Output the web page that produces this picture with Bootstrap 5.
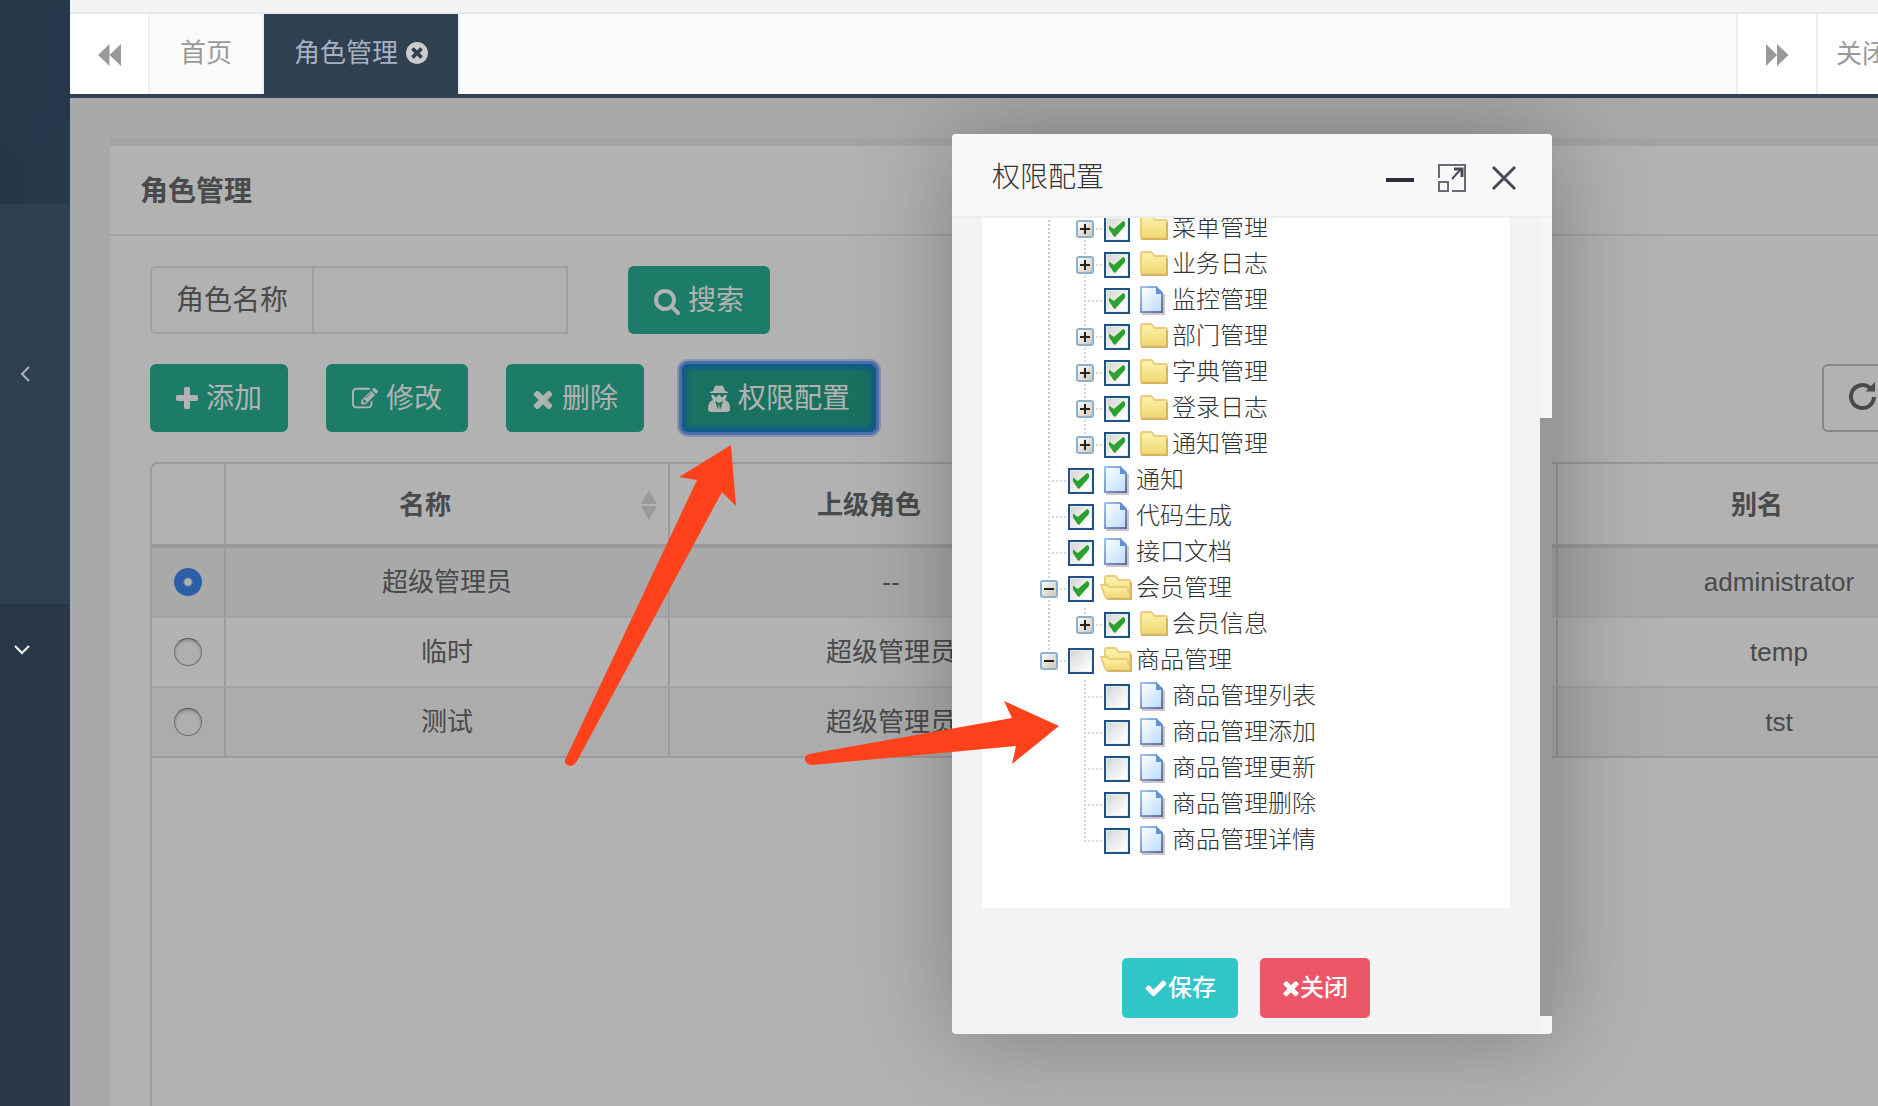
<!DOCTYPE html>
<html lang="zh-CN">
<head>
<meta charset="utf-8">
<meta name="viewport" content="width=device-width, initial-scale=1">
<title>角色管理</title>
<link href="https://cdn.jsdelivr.net/npm/bootstrap@5.3.0/dist/css/bootstrap.min.css" rel="stylesheet">
<style>
:root { --navy:#2f4050; --line:#e7eaec; --grid:#ddd; --ink:#676a6c; --teal:#29b294; }
body { font-family:"Liberation Sans","Noto Sans CJK SC",sans-serif; font-size:26px; line-height:36px; color:var(--ink); background:#f3f3f4; }
button, input { font-family:inherit; }
.side { width:70px; background:#293846; }
.side-head { height:204px; background:#263949; }
.side-group { height:400px; background:var(--navy); padding:162px 0 0 20px; color:#a7b1c2; }
.side-open { padding:40px 0 0 13px; color:#fff; }
.side a { color:inherit; line-height:0; }
.content-col { min-width:0; }
.tabs-row { margin-top:12px; height:86px; border-top:2px solid var(--line); border-bottom:4px solid var(--navy); background:#fafafa; }
.tabs-row button, .tabs-row a { border:0; background:#fff; color:#999; text-decoration:none; white-space:nowrap; }
.tabs-row .step { width:80px; padding:0 0 2px 2px; }
.tabs-row .edge-r { border-right:2px solid #eee; }
.tabs-row .edge-l { border-left:2px solid #eee; }
.tabs-row .tab { background:#fafafa; padding:0 30px 2px; }
.tabs-row .tab.current { background:var(--navy); color:#a7b1c2; gap:8px; }
.tabs-row .more { width:62px; padding:0 0 0 18px; overflow:hidden; }
.stage { padding:40px 0 0 40px; }
.panel { border-top:8px solid var(--line); background:#fff; }
.panel-title { font-size:28px; font-weight:700; line-height:40px; padding:26px 30px 22px; border-bottom:2px solid var(--line); }
.panel-main { padding:30px 0 0 40px; }
.big, .find { font-size:28px; line-height:40px; }
.find { height:68px; width:418px; }
.find label { border:2px solid #e5e6e7; border-right:0; border-radius:6px 0 0 6px; width:162px; padding-top:2px; }
.find input { border:2px solid #e5e6e7; border-radius:0; min-width:0; font-size:28px; }
.find-go { margin-left:60px; }
.tools { margin-top:30px; gap:38px; }
.big { height:68px; padding:2px 24px 0; border:2px solid var(--teal); border-radius:6px; background:var(--teal); color:#fff; gap:8px; white-space:nowrap; }
.big.active-focus { background:#25a489; border-color:#1a81c8; box-shadow:0 0 0 3px #6aa3f8,0 0 0 5px #c0d4fa,inset 0 0 5px 3px #1a81c8; }
.reload { width:84px; margin-right:-28px; height:68px; border:2px solid #c0c0c0; border-radius:6px; background:#fff; color:var(--ink); padding:0 0 4px 24px; text-align:left; line-height:0; }
.grid-box { border:2px solid var(--grid); border-right:0; border-bottom:0; border-radius:8px 0 0 0; margin-top:30px; }
.grid-box table { table-layout:fixed; width:1850px; border-collapse:separate; border-spacing:0; }
.grid-box th, .grid-box td { border-right:2px solid var(--grid); text-align:center; padding:0; vertical-align:middle; }
.grid-box th { height:84px; border-bottom:4px solid var(--grid); padding-top:2px; }
.grid-box td { height:70px; border-bottom:2px solid var(--line); }
.grid-box tr:last-child td { border-bottom-color:var(--grid); }
.grid-box tbody tr:nth-child(1) { background:#f3f3f3; }
.grid-box tbody tr:nth-child(3) { background:#f6f6f6; }
.c-pick { width:74px; } .c-data { width:444px; }
.th-in { padding:0 11px 0 16px; }
.sorter { width:49px; text-align:right; line-height:0; }
.pick { display:block; appearance:none; width:28px; height:28px; margin:0 auto; border-radius:50%; border:1px solid #9b9b9b; border-top-color:#777; background:#fbfbfb; box-shadow:inset 0 2px 3px #ccc; }
.pick:checked { border:0; background:radial-gradient(circle,#fff 3px,#4089f0 5px); box-shadow:none; }
.veil { position:absolute; inset:0; background:rgba(0,0,0,.3); }
.dialog { position:absolute; left:882px; top:36px; width:600px; border-radius:4px; background:#f3f3f4; box-shadow:2px 2px 100px rgba(0,0,0,.3); color:#333; }
.dialog-top { height:84px; background:#f8f8f8; border-bottom:2px solid #eee; border-radius:4px 4px 0 0; padding:6px 34px 0 40px; font-size:28px; font-weight:300; }
.dialog-top button { border:0; background:none; padding:0; line-height:0; }
.dialog-tools { gap:24px; }
.tree-pane { height:690px; margin:0 42px 0 30px; background:#fff; overflow:hidden; padding-left:50px; font-size:24px; font-weight:300; }
.tree-pane ul { list-style:none; margin:0; padding:0; }
.tree-pane > ul { margin-top:-7px; }
.tree-pane ul ul { padding-left:36px; }
.rail { background:radial-gradient(circle,#c8c8c8 1px,transparent 1px) 15px 0/4px 4px repeat-y; }
.node { height:36px; }
.node .twig { width:36px; height:36px; flex:none; }
.node input { appearance:none; width:26px; height:26px; margin:0 10px 0 0; border:2px solid #1f5385; background:linear-gradient(135deg,#d3d4cf,#fff 85%); box-shadow:inset 0 0 0 1px #e9eef2; flex:none; }
.node input:checked::after { content:""; display:block; width:16px; height:16px; margin:3px; background:#2ba12f; clip-path:polygon(0 28%,30% 50%,88% 0,100% 8%,100% 30%,38% 100%,28% 94%,0 52%); }
.node .pic { width:32px; height:32px; margin:0 4px 2px -4px; flex:none; }
.node label { line-height:34px; padding-bottom:2px; }
.dialog-foot { padding:50px 12px 16px 0; gap:22px; }
.act { height:60px; border:0; border-radius:5px; padding:0 22px; color:#fff; font-size:24px; font-weight:500; }
.act-save { background:#30c5c8; } .act-close { background:#eb5768; }
.track { position:absolute; right:0; top:84px; width:12px; bottom:0; background:#f6f6f6; border-radius:0 0 4px 0; }
.thumb { margin-top:200px; height:598px; background:#989898; }
.marks { position:absolute; left:0; top:0; pointer-events:none; }
</style>
<script src="https://cdn.jsdelivr.net/npm/bootstrap@5.3.0/dist/js/bootstrap.bundle.min.js"></script>
</head>
<body>
<svg width="0" height="0" class="position-absolute" aria-hidden="true">
 <defs>
  <linearGradient id="gF" x1="0" y1="0" x2="0" y2="1"><stop offset="0" stop-color="#fdf4ae"/><stop offset="1" stop-color="#efd873"/></linearGradient>
  <linearGradient id="gD" x1="0" y1="0" x2="1" y2="1"><stop offset="0" stop-color="#fff"/><stop offset="1" stop-color="#b9dcfb"/></linearGradient>
  <linearGradient id="gE" x1="0" y1="0" x2="1" y2="1"><stop offset="0" stop-color="#9cc4f0"/><stop offset="1" stop-color="#67699f"/></linearGradient>
  <linearGradient id="gB" x1="0" y1="0" x2="1" y2="1"><stop offset="0" stop-color="#fff"/><stop offset="1" stop-color="#cbc3b5"/></linearGradient>
 </defs>
 <symbol id="times" viewBox="192 0 1408 1792"><path fill="currentColor" d="M1490 1322q0 40-28 68l-136 136q-28 28-68 28t-68-28l-294-294-294 294q-28 28-68 28t-68-28l-136-136q-28-28-28-68t28-68l294-294-294-294q-28-28-28-68t28-68l136-136q28-28 68-28t68 28l294 294 294-294q28-28 68-28t68 28l136 136q28 28 28 68t-28 68l-294 294 294 294q28 28 28 68z"/></symbol>
 <symbol id="back" viewBox="0 0 24 24"><path fill="currentColor" d="M11.500 1v22L0 12zM23 1v22L11.500 12z"/></symbol>
 <symbol id="leaf" viewBox="0 0 36 36"><path d="M17 2V36M21 18H36" stroke="#ccc" stroke-width="2" stroke-linecap="round" stroke-dasharray="0 4" fill="none"/></symbol>
 <symbol id="last" viewBox="0 0 36 36"><path d="M17 2V18H36" stroke="#ccc" stroke-width="2" stroke-linecap="round" stroke-dasharray="0 4" fill="none"/></symbol>
 <symbol id="boxed" viewBox="0 0 36 36"><path d="M29 18H36" stroke="#ccc" stroke-width="2" stroke-linecap="round" stroke-dasharray="0 4"/><rect x="9" y="10" width="16" height="16" rx="2" fill="url(#gB)" stroke="#8fb0cd" stroke-width="2"/><path d="M12 18H22" stroke="#222" stroke-width="2"/></symbol>
 <symbol id="plus-mid" viewBox="0 0 36 36"><path d="M17 2V36" stroke="#ccc" stroke-width="2" stroke-linecap="round" stroke-dasharray="0 4"/><use href="#boxed"/><path d="M17 13V23" stroke="#222" stroke-width="2"/></symbol>
 <symbol id="plus-end" viewBox="0 0 36 36"><path d="M17 2V10" stroke="#ccc" stroke-width="2" stroke-linecap="round" stroke-dasharray="0 4"/><use href="#boxed"/><path d="M17 13V23" stroke="#222" stroke-width="2"/></symbol>
 <symbol id="minus-mid" viewBox="0 0 36 36"><path d="M17 2V36" stroke="#ccc" stroke-width="2" stroke-linecap="round" stroke-dasharray="0 4"/><use href="#boxed"/></symbol>
 <symbol id="minus-end" viewBox="0 0 36 36"><path d="M17 2V10" stroke="#ccc" stroke-width="2" stroke-linecap="round" stroke-dasharray="0 4"/><use href="#boxed"/></symbol>
 <symbol id="dir" viewBox="0 0 32 32"><path d="M5 25V6q0-2 2-2h8l4 4h10q2 0 2 2v15q0 1-1 1H6q-1 0-1-1z" fill="url(#gF)" stroke="#ecca80" stroke-width="2"/><path d="M5 27H31V11" fill="none" stroke="#d9b45e" stroke-width="2"/></symbol>
 <symbol id="dir-open" viewBox="0 0 32 32"><path d="M5 14V6q0-2 2-2h8l4 4h9q2 0 2 2v16H8z" fill="url(#gF)" stroke="#ebcd7e" stroke-width="2"/><path d="M1 13h6l2 2h17q1 0 1.500 1l2.500 10H7q-1 0-1.500-1z" fill="url(#gF)" stroke="#ebcd7e" stroke-width="2"/><path d="M7 27H31V10" fill="none" stroke="#d9b45e" stroke-width="2"/></symbol>
 <symbol id="doc" viewBox="0 0 32 32"><path d="M6 30H28V10" fill="none" stroke="#c8c8cc" stroke-width="2"/><path d="M5 3H20L26 9V28H5z" fill="url(#gD)" stroke="url(#gE)" stroke-width="2"/><path d="M20 2L27 10H20z" fill="#5f93cf"/></symbol>
</svg>

<div class="d-flex min-vh-100 overflow-hidden">
 <nav class="side flex-shrink-0" aria-label="侧栏">
  <div class="side-head"><svg width="70" height="204" viewBox="0 0 70 204"><path d="M0 138L24 160 70 120V204H0z" fill="#263a49"/><path d="M0 138L24 160 22 204H0z" fill="#253745"/><path d="M50 0L70 10V120L24 160Q45 90 50 0z" fill="#253748"/><path d="M24 160L70 188V120z" fill="#273a4a"/></svg></div>
  <div class="side-group"><a href="#" aria-label="展开" class="d-block"><svg width="12" height="16" viewBox="0 0 12 16" fill="none" stroke="currentColor" stroke-width="2"><path d="M9 1L2 8l7 7"/></svg></a></div>
  <div class="side-open"><a href="#" aria-label="收起" class="d-block"><svg width="17" height="11" viewBox="0 0 17 11" fill="none" stroke="currentColor" stroke-width="2"><path d="M2 2l7 7 7-7"/></svg></a></div>
 </nav>

 <div class="content-col d-flex flex-column flex-grow-1">
  <div class="tabs-row d-flex align-items-stretch flex-shrink-0">
   <button class="step edge-r" aria-label="向左"><svg width="24" height="24"><use href="#back"/></svg></button>
   <a href="#" class="tab edge-r d-flex align-items-center">首页</a>
   <a href="#" class="tab current edge-r d-flex align-items-center">角色管理
    <svg width="22" height="22" viewBox="128 128 1536 1536"><path fill="#ccc" d="M1277 1122q0-26-19-45l-181-181 181-181q19-19 19-45 0-27-19-46l-90-90q-19-19-46-19-26 0-45 19l-181 181-181-181q-19-19-45-19-27 0-46 19l-90 90q-19 19-19 46 0 26 19 45l181 181-181 181q-19 19-19 45 0 27 19 46l90 90q19 19 46 19 26 0 45-19l181-181 181 181q19 19 45 19 27 0 46-19l90-90q19-19 19-46zm387-226q0 209-103 385.500t-279.500 279.500-385.500 103-385.500-103-279.500-279.500-103-385.500 103-385.500 279.500-279.500 385.500-103 385.500 103 279.500 279.500 103 385.500z"/></svg></a>
   <button class="step edge-l ms-auto" aria-label="向右"><svg width="24" height="24" viewBox="0 0 24 24"><path fill="currentColor" d="M0 1v22l11-11zM11 1v22l11.500-11z"/></svg></button>
   <button class="more edge-l text-start flex-shrink-0">关闭</button>
  </div>

  <main class="stage position-relative overflow-hidden flex-grow-1 d-flex flex-column">
   <section class="panel flex-grow-1 d-flex flex-column">
    <h1 class="panel-title m-0">角色管理</h1>
    <div class="panel-main flex-grow-1 d-flex flex-column">
     <form class="d-flex">
      <div class="find d-flex"><label for="roleName" class="d-flex align-items-center justify-content-center flex-shrink-0">角色名称</label><input id="roleName" type="text" class="flex-grow-1"></div>
      <button type="button" class="big find-go d-flex align-items-center"><svg width="26" height="28" viewBox="64 0 1664 1792"><path fill="currentColor" d="M1216 832q0-185-131.500-316.500t-316.500-131.500-316.500 131.500-131.500 316.500 131.500 316.500 316.500 131.500 316.500-131.500 131.500-316.500zm512 832q0 52-38 90t-90 38q-54 0-90-38l-343-342q-179 124-399 124-143 0-273.500-55.500t-225-150-150-225-55.500-273.500 55.500-273.500 150-225 225-150 273.500-55.500 273.500 55.500 225 150 150 225 55.500 273.500q0 220-124 399l343 343q37 37 37 90z"/></svg>搜索</button>
     </form>
     <div class="tools d-flex">
      <button class="big d-flex align-items-center"><svg width="22" height="28" viewBox="192 0 1408 1792"><path fill="currentColor" d="M1600 736v192q0 40-28 68t-68 28h-416v416q0 40-28 68t-68 28h-192q-40 0-68-28t-28-68v-416h-416q-40 0-68-28t-28-68v-192q0-40 28-68t68-28h416v-416q0-40 28-68t68-28h192q40 0 68 28t28 68v416h416q40 0 68 28t28 68z"/></svg>添加</button>
      <button class="big d-flex align-items-center"><svg width="26" height="28" viewBox="0 0 1792 1792"><path fill="currentColor" d="M888 1184l116-116-152-152-116 116v56h96v96h56zm440-720q-16-16-33 1l-350 350q-17 17-1 33t33-1l350-350q17-17 1-33zm80 594v190q0 119-84.500 203.500t-203.500 84.500h-832q-119 0-203.500-84.500t-84.500-203.500v-832q0-119 84.500-203.500t203.500-84.500h832q63 0 117 25 15 7 18 23 3 17-9 29l-49 49q-14 14-32 8-23-6-45-6h-832q-66 0-113 47t-47 113v832q0 66 47 113t113 47h832q66 0 113-47t47-113v-126q0-13 9-22l64-64q15-15 35-7t20 29zm-96-738l288 288-672 672h-288v-288zm444 132l-92 92-288-288 92-92q28-28 68-28t68 28l152 152q28 28 28 68t-28 68z"/></svg>修改</button>
      <button class="big d-flex align-items-center"><svg width="22" height="28"><use href="#times"/></svg>删除</button>
      <button class="big active-focus d-flex align-items-center"><svg width="22" height="28" viewBox="0 0 22 28"><path fill="currentColor" d="M7 1q2-1 4 0 2-1 4 0l2 5 3 1q1 1-1 1H3q-2 0-1-1l3-1zM3 10h16l-1 3-1 2 2 1q3 2 3 8 0 3-3 3H3q-3 0-3-3 0-6 3-8l2-1-1-2z"/><path fill="#25a489" d="M6 10h4l-1 2H7zM12 10h4l-1 2h-2zM7 16l4 2-1 7zM15 16l-4 2 1 7z"/></svg>权限配置</button>
      <button class="reload ms-auto flex-shrink-0" aria-label="刷新"><svg width="30" height="30" viewBox="0 0 30 30"><path d="M26 16A11.500 11.500 0 1 1 22 6.800" fill="none" stroke="currentColor" stroke-width="4"/><path fill="currentColor" d="M27 1v9.500H17.500z"/></svg></button>
     </div>
     <div class="grid-box flex-grow-1 overflow-hidden">
      <table>
       <colgroup><col class="c-pick"><col class="c-data"><col class="c-data"><col class="c-data"><col class="c-data"></colgroup>
       <thead><tr><th></th>
        <th scope="col"><div class="th-in d-flex align-items-center"><span class="flex-grow-1">名称</span><span class="sorter"><svg width="16" height="30" viewBox="0 0 16 30" fill="#ddd"><path d="M8 0l8 14H0zM0 16h16L8 30z"/></svg></span></div></th>
        <th scope="col"><div class="th-in d-flex"><span class="flex-grow-1">上级角色</span><span class="sorter"></span></div></th>
        <th></th>
        <th scope="col"><div class="th-in d-flex"><span class="flex-grow-1">别名</span><span class="sorter"></span></div></th></tr></thead>
       <tbody>
        <tr><td><input class="pick" type="radio" name="role" aria-label="超级管理员" checked></td><td>超级管理员</td><td>--</td><td></td><td>administrator</td></tr>
        <tr><td><input class="pick" type="radio" name="role" aria-label="临时"></td><td>临时</td><td>超级管理员</td><td></td><td>temp</td></tr>
        <tr><td><input class="pick" type="radio" name="role" aria-label="测试"></td><td>测试</td><td>超级管理员</td><td></td><td>tst</td></tr>
       </tbody>
      </table>
     </div>
    </div>
   </section>

   <div class="veil"></div>

   <div class="dialog" role="dialog" aria-labelledby="dlgTitle">
    <div class="dialog-top d-flex align-items-center"><span id="dlgTitle" class="flex-grow-1">权限配置</span>
     <div class="dialog-tools d-flex align-items-center">
      <button aria-label="最小化"><svg width="28" height="28" viewBox="0 0 28 28"><path d="M0 16h28" stroke="#2e2d3c" stroke-width="4"/></svg></button>
      <button aria-label="最大化"><svg width="28" height="28" viewBox="0 0 28 28" fill="none" stroke="#6c6a78" stroke-width="2"><path d="M1 14V1H27V27H14"/><rect x="1" y="18" width="9" height="9"/><path d="M14 15L23 5" stroke="#4a4958"/><path d="M16 5h8v8" stroke="#4a4958" stroke-width="3"/></svg></button>
      <button aria-label="关闭"><svg width="28" height="28" viewBox="0 0 28 28"><path d="M3 3L25 25M25 3L3 25" stroke="#4a4958" stroke-width="3"/></svg></button>
     </div>
    </div>
    <div class="tree-pane">
     <ul>
      <li><ul class="rail">
       <li class="node d-flex align-items-center"><svg class="twig"><use href="#plus-mid"/></svg><input type="checkbox" id="n0" checked><svg class="pic"><use href="#dir"/></svg><label for="n0">菜单管理</label></li>
       <li class="node d-flex align-items-center"><svg class="twig"><use href="#plus-mid"/></svg><input type="checkbox" id="n1" checked><svg class="pic"><use href="#dir"/></svg><label for="n1">业务日志</label></li>
       <li class="node d-flex align-items-center"><svg class="twig"><use href="#leaf"/></svg><input type="checkbox" id="n2" checked><svg class="pic"><use href="#doc"/></svg><label for="n2">监控管理</label></li>
       <li class="node d-flex align-items-center"><svg class="twig"><use href="#plus-mid"/></svg><input type="checkbox" id="n3" checked><svg class="pic"><use href="#dir"/></svg><label for="n3">部门管理</label></li>
       <li class="node d-flex align-items-center"><svg class="twig"><use href="#plus-mid"/></svg><input type="checkbox" id="n4" checked><svg class="pic"><use href="#dir"/></svg><label for="n4">字典管理</label></li>
       <li class="node d-flex align-items-center"><svg class="twig"><use href="#plus-mid"/></svg><input type="checkbox" id="n5" checked><svg class="pic"><use href="#dir"/></svg><label for="n5">登录日志</label></li>
       <li class="node d-flex align-items-center"><svg class="twig"><use href="#plus-end"/></svg><input type="checkbox" id="n6" checked><svg class="pic"><use href="#dir"/></svg><label for="n6">通知管理</label></li>
      </ul></li>
      <li class="node d-flex align-items-center"><svg class="twig"><use href="#leaf"/></svg><input type="checkbox" id="n7" checked><svg class="pic"><use href="#doc"/></svg><label for="n7">通知</label></li>
      <li class="node d-flex align-items-center"><svg class="twig"><use href="#leaf"/></svg><input type="checkbox" id="n8" checked><svg class="pic"><use href="#doc"/></svg><label for="n8">代码生成</label></li>
      <li class="node d-flex align-items-center"><svg class="twig"><use href="#leaf"/></svg><input type="checkbox" id="n9" checked><svg class="pic"><use href="#doc"/></svg><label for="n9">接口文档</label></li>
      <li><div class="node d-flex align-items-center"><svg class="twig"><use href="#minus-mid"/></svg><input type="checkbox" id="n10" checked><svg class="pic"><use href="#dir-open"/></svg><label for="n10">会员管理</label></div>
       <ul class="rail"><li class="node d-flex align-items-center"><svg class="twig"><use href="#plus-end"/></svg><input type="checkbox" id="n11" checked><svg class="pic"><use href="#dir"/></svg><label for="n11">会员信息</label></li></ul></li>
      <li><div class="node d-flex align-items-center"><svg class="twig"><use href="#minus-end"/></svg><input type="checkbox" id="n12"><svg class="pic"><use href="#dir-open"/></svg><label for="n12">商品管理</label></div>
       <ul>
        <li class="node d-flex align-items-center"><svg class="twig"><use href="#leaf"/></svg><input type="checkbox" id="n13"><svg class="pic"><use href="#doc"/></svg><label for="n13">商品管理列表</label></li>
        <li class="node d-flex align-items-center"><svg class="twig"><use href="#leaf"/></svg><input type="checkbox" id="n14"><svg class="pic"><use href="#doc"/></svg><label for="n14">商品管理添加</label></li>
        <li class="node d-flex align-items-center"><svg class="twig"><use href="#leaf"/></svg><input type="checkbox" id="n15"><svg class="pic"><use href="#doc"/></svg><label for="n15">商品管理更新</label></li>
        <li class="node d-flex align-items-center"><svg class="twig"><use href="#leaf"/></svg><input type="checkbox" id="n16"><svg class="pic"><use href="#doc"/></svg><label for="n16">商品管理删除</label></li>
        <li class="node d-flex align-items-center"><svg class="twig"><use href="#last"/></svg><input type="checkbox" id="n17"><svg class="pic"><use href="#doc"/></svg><label for="n17">商品管理详情</label></li>
       </ul></li>
     </ul>
    </div>
    <div class="dialog-foot d-flex justify-content-center">
     <button class="act act-save d-flex align-items-center"><svg width="24" height="24" viewBox="0 0 1792 1792"><path fill="currentColor" d="M1671 566q0 40-28 68l-724 724-136 136q-28 28-68 28t-68-28l-136-136-362-362q-28-28-28-68t28-68l136-136q28-28 68-28t68 28l294 295 656-657q28-28 68-28t68 28l136 136q28 28 28 68z"/></svg>保存</button>
     <button class="act act-close d-flex align-items-center"><svg width="18" height="24"><use href="#times"/></svg>关闭</button>
    </div>
    <div class="track"><div class="thumb"></div></div>
   </div>
  </main>
 </div>
</div>

<svg class="marks" width="1100" height="800" viewBox="0 0 1100 800" fill="#ff421b" aria-hidden="true">
 <path d="M731 445L736 506 722 492 577 761Q574 766 570 766 564 764 565 760L697 480 679 477z"/>
 <path d="M1059 726L1012 764 1016 746 812 765Q805 764 805 759 805 755 809 754L1012 718 1004 701z"/>
</svg>
</body>
</html>
